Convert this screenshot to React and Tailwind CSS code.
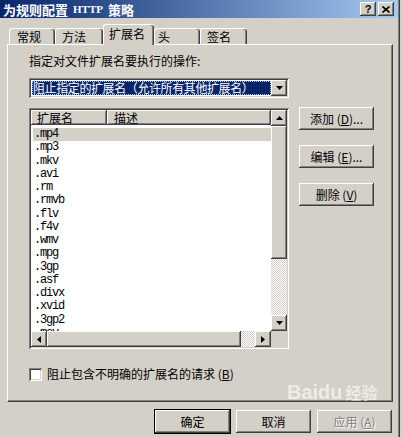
import React from "react";

const raised = "bg-[#d4d0c8] shadow-[inset_-1px_-1px_#404040,inset_1px_1px_#ffffff,inset_-2px_-2px_#808080,inset_2px_2px_#d4d0c8]";
const sunken = "shadow-[inset_1px_1px_#808080,inset_-1px_-1px_#ffffff,inset_2px_2px_#404040,inset_-2px_-2px_#d4d0c8]";
const checker = "bg-[conic-gradient(#ffffff_25%,#d4d0c8_0_50%,#ffffff_0_75%,#d4d0c8_0)] bg-[length:2px_2px]";

const exts = [".mp4", ".mp3", ".mkv", ".avi", ".rm", ".rmvb", ".flv", ".f4v", ".wmv", ".mpg", ".3gp", ".asf", ".divx", ".xvid", ".3gp2", ".mov"];

const tabs = [
    { label: "常规", w: "w-[46px]", pl: "pl-[7px]" },
    { label: "方法", w: "w-[48px]", pl: "pl-[6px]" },
    { label: "扩展名", w: "w-[51px]", pl: "pl-[5px]", active: true },
    { label: "头", w: "w-[46px]", pl: "pl-[3px]" },
    { label: "签名", w: "w-[47px]", pl: "pl-[6px]" },
];

const Arrow = ({ dir }) => {
    const pts = { up: "0,4 3.5,0 7,4", down: "0,0 7,0 3.5,4", left: "4,0 4,7 0,3.5", right: "0,0 0,7 4,3.5" }[dir];
    const horiz = dir === "left" || dir === "right";
    return (
        <svg width={horiz ? 4 : 7} height={horiz ? 7 : 4} viewBox={horiz ? "0 0 4 7" : "0 0 7 4"}>
            <polygon points={pts} fill="#000" />
        </svg>
    );
};

const ScrollBtn = ({ dir }) => (
    <div className={`w-[16px] h-[16px] flex items-center justify-center shrink-0 ${raised}`}>
        <Arrow dir={dir} />
    </div>
);

const Btn = ({ children, className = "" }) => (
    <div className={`w-[75px] h-[23px] flex items-center justify-center text-[12px] text-black ${raised} ${className}`}>{children}</div>
);

const App = () => {
    return (
        <div className="w-[403px] h-[437px] bg-[#d4d0c8] flex overflow-hidden relative" style={{ fontFamily: '"Noto Sans CJK SC", "Liberation Sans", sans-serif' }}>
            <div className="w-[399px] h-full flex flex-col border-r border-[#808080]">
                {/* title bar */}
                <div className="h-[18px] bg-linear-to-r from-[#0a246a] to-[#a6caf0] flex items-center justify-between pl-[3px] pr-[4px]">
                    <span className="text-white font-bold text-[13px] leading-none flex items-center gap-[5px]">
                        为规则配置
                        <span className="text-[11px]" style={{ fontFamily: '"Liberation Serif", serif' }}>HTTP</span>
                        策略
                    </span>
                    <div className="flex gap-[2px]">
                        <div className={`w-[16px] h-[14px] flex items-center justify-center text-[11px] font-bold leading-none ${raised}`} style={{ fontFamily: '"Liberation Sans", sans-serif' }}>?</div>
                        <div className={`w-[16px] h-[14px] flex items-center justify-center ${raised}`}>
                            <svg width="8" height="7" viewBox="0 0 8 7"><path d="M0.5 0.5 L7.5 6.5 M7.5 0.5 L0.5 6.5" stroke="#000" strokeWidth="1.6" /></svg>
                        </div>
                    </div>
                </div>

                {/* tabs */}
                <div className="flex items-end h-[21px] mt-[5px] pl-[9px] relative z-10">
                    {tabs.map((t, i) => (
                        <div key={i} className={`${t.w} ${t.pl} ${t.active ? "h-[21px] mb-[-1px] bg-[#d4d0c8] pt-[1px]" : "h-[16px]"} border-l border-t border-white rounded-t-[3px] shadow-[inset_-1px_0_#404040,inset_-2px_0_#808080] text-[12px] leading-[15px] text-black`}>
                            {t.label}
                        </div>
                    ))}
                </div>

                {/* panel */}
                <div className="ml-[7px] w-[386px] h-[358px] border-l border-t border-white border-r border-b border-r-[#404040] border-b-[#404040] shadow-[inset_-1px_-1px_#808080] flex flex-col pl-[21px] pt-[9px]">
                    <div className="text-[12px] leading-[14px] text-black">指定对文件扩展名要执行的操作:</div>

                    {/* combobox */}
                    <div className={`mt-[10px] w-[260px] h-[20px] bg-white p-[2px] flex ${sunken}`}>
                        <div className="flex-1 flex items-center pl-[1px] py-[1px]">
                            <div className="w-full h-full bg-[#0a246a] text-white text-[12px] leading-[14px] tracking-[-0.4px] flex items-center pl-[1px] outline-1 outline-dotted outline-[#a6caf0] -outline-offset-1 whitespace-nowrap">
                                阻止指定的扩展名（允许所有其他扩展名）
                            </div>
                        </div>
                        <ScrollBtn dir="down" />
                    </div>

                    {/* list + buttons */}
                    <div className="flex mt-[10px]">
                        <div className={`w-[260px] h-[241px] bg-white p-[2px] flex flex-col ${sunken}`}>
                            <div className="flex h-[221px]">
                                <div className="w-[240px] flex flex-col">
                                    <div className="flex h-[15px] text-[12px] leading-[15px] text-black">
                                        <div className={`w-[76px] pl-[6px] ${raised}`}>扩展名</div>
                                        <div className={`flex-1 pl-[7px] ${raised}`}>描述</div>
                                    </div>
                                    <div className="flex-1 overflow-hidden pt-[3px] pl-[2px]">
                                        {exts.map((e, i) => (
                                            <div key={i} className={`h-[13.25px] leading-[13px] text-[12px] tracking-[-1.2px] pl-[1px] text-black ${i === 0 ? "bg-[#d4d0c8]" : ""}`} style={{ fontFamily: '"Liberation Mono", monospace' }}>
                                                {e}
                                            </div>
                                        ))}
                                    </div>
                                </div>
                                <div className="w-[16px] flex flex-col">
                                    <ScrollBtn dir="up" />
                                    <div className={`h-[133px] ${raised}`} />
                                    <div className={`flex-1 ${checker}`} />
                                    <ScrollBtn dir="down" />
                                </div>
                            </div>
                            <div className="flex h-[16px]">
                                <ScrollBtn dir="left" />
                                <div className={`w-[194px] ${raised}`} />
                                <div className={`w-[14px] ${checker}`} />
                                <ScrollBtn dir="right" />
                                <div className="w-[16px] bg-[#d4d0c8]" />
                            </div>
                        </div>

                        <div className="ml-[10px] -mt-[1px] flex flex-col gap-[15px]">
                            <Btn>添加 (<u>D</u>)...</Btn>
                            <Btn>编辑 (<u>E</u>)...</Btn>
                            <Btn>删除 (<u>V</u>)</Btn>
                        </div>
                    </div>

                    {/* checkbox */}
                    <div className="flex items-center mt-[18px] gap-[5px]">
                        <div className={`w-[13px] h-[13px] bg-white ${sunken}`} />
                        <span className="text-[12px] leading-[14px] text-black">阻止包含不明确的扩展名的请求 (<u>B</u>)</span>
                    </div>
                </div>

                {/* bottom buttons */}
                <div className="flex justify-end gap-[6px] mt-[8px] pr-[6px]">
                    <Btn className="outline outline-1 outline-black h-[21px]">确定</Btn>
                    <Btn className="h-[21px]">取消</Btn>
                    <Btn className="h-[21px]">
                        <span className="text-[#808080] [text-shadow:1px_1px_#ffffff]">应用 (<u>A</u>)</span>
                    </Btn>
                </div>
            </div>
            <div className="w-[1px] h-full bg-[#404040]" />
            <div className="flex-1 h-full bg-[#d4d0c8]" />

            {/* watermark */}
            <div className="absolute left-[287px] top-[382px] pointer-events-none opacity-60 text-white font-bold text-[20px] leading-[20px] whitespace-nowrap" style={{ fontFamily: '"Liberation Sans", sans-serif' }}>
                Baidu<span className="text-[16px] ml-[3px]" style={{ fontFamily: '"Noto Sans CJK SC", sans-serif' }}>经验</span>
            </div>
        </div>
    );
};

export default App;
